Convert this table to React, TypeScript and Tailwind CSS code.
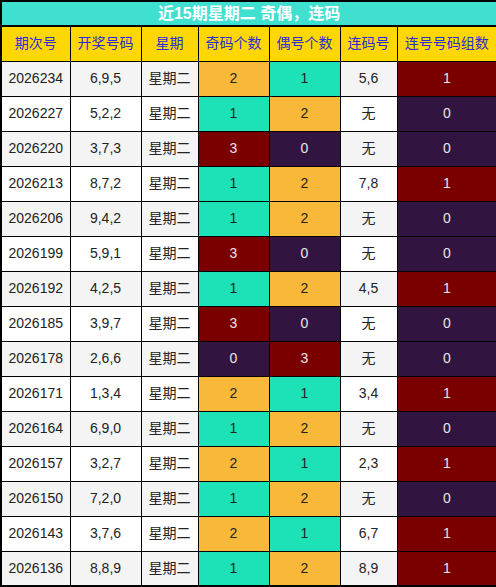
import React from "react";

const rows: [string, string, number, number, string, number][] = [
  ["2026234", "6,9,5", 2, 1, "5,6", 1],
  ["2026227", "5,2,2", 1, 2, "无", 0],
  ["2026220", "3,7,3", 3, 0, "无", 0],
  ["2026213", "8,7,2", 1, 2, "7,8", 1],
  ["2026206", "9,4,2", 1, 2, "无", 0],
  ["2026199", "5,9,1", 3, 0, "无", 0],
  ["2026192", "4,2,5", 1, 2, "4,5", 1],
  ["2026185", "3,9,7", 3, 0, "无", 0],
  ["2026178", "2,6,6", 0, 3, "无", 0],
  ["2026171", "1,3,4", 2, 1, "3,4", 1],
  ["2026164", "6,9,0", 1, 2, "无", 0],
  ["2026157", "3,2,7", 2, 1, "2,3", 1],
  ["2026150", "7,2,0", 1, 2, "无", 0],
  ["2026143", "3,7,6", 2, 1, "6,7", 1],
  ["2026136", "8,8,9", 1, 2, "8,9", 1],
];

const countCls = (n: number) => {
  if (n === 0) return "bg-[#311540] text-[#e6e6e6]";
  if (n === 1) return "bg-[#1de2b7] text-[#222]";
  if (n === 2) return "bg-[#f8b93b] text-[#222]";
  return "bg-[#7a0000] text-[#e6e6e6]";
};

const groupCls = (n: number) =>
  n === 0 ? "bg-[#311540] text-[#e6e6e6]" : "bg-[#7a0000] text-[#e6e6e6]";

const headers = ["期次号", "开奖号码", "星期", "奇码个数", "偶号个数", "连码号", "连号号码组数"];
const widths = ["w-[69px]", "w-[71px]", "w-[57px]", "w-[71px]", "w-[71px]", "w-[57px]", "w-[100px]"];

export default function App() {
  const font = { fontFamily: '"Liberation Sans", Arial, "Noto Sans CJK SC", sans-serif' };
  return (
    <div className="w-[496px] h-[587px] bg-white" style={font}>
      <table className="w-[496px] border-collapse border-2 border-black table-fixed text-[14px]">
        <colgroup>
          {widths.map((w, i) => (
            <col key={i} className={w} />
          ))}
        </colgroup>
        <thead>
          <tr className="h-[25px]">
            <th
              colSpan={7}
              className="bg-[#40e0d0] text-white font-bold text-[16px] text-center border-2 border-black p-0 leading-[22px]"
            >
              近15期星期二 奇偶，连码
            </th>
          </tr>
          <tr className="h-[35px]">
            {headers.map((h) => (
              <th
                key={h}
                className="bg-[#ffd700] text-[#2b2bd9] font-normal text-[14px] border border-black p-0 text-center"
              >
                {h}
              </th>
            ))}
          </tr>
        </thead>
        <tbody>
          {rows.map((r, i) => {
            const rowBg = i % 2 === 0 ? "bg-[#f4f4f4]" : "bg-white";
            const base = "border border-black p-0 text-center";
            return (
              <tr key={r[0]} className="h-[35px]">
                <td className={`${base} ${rowBg} text-[#222]`}>{r[0]}</td>
                <td className={`${base} ${rowBg} text-[#222]`}>{r[1]}</td>
                <td className={`${base} ${rowBg} text-[#222]`}>星期二</td>
                <td className={`${base} ${countCls(r[2])}`}>{r[2]}</td>
                <td className={`${base} ${countCls(r[3])}`}>{r[3]}</td>
                <td className={`${base} ${rowBg} text-[#222]`}>{r[4]}</td>
                <td className={`${base} ${groupCls(r[5])}`}>{r[5]}</td>
              </tr>
            );
          })}
        </tbody>
      </table>
    </div>
  );
}
